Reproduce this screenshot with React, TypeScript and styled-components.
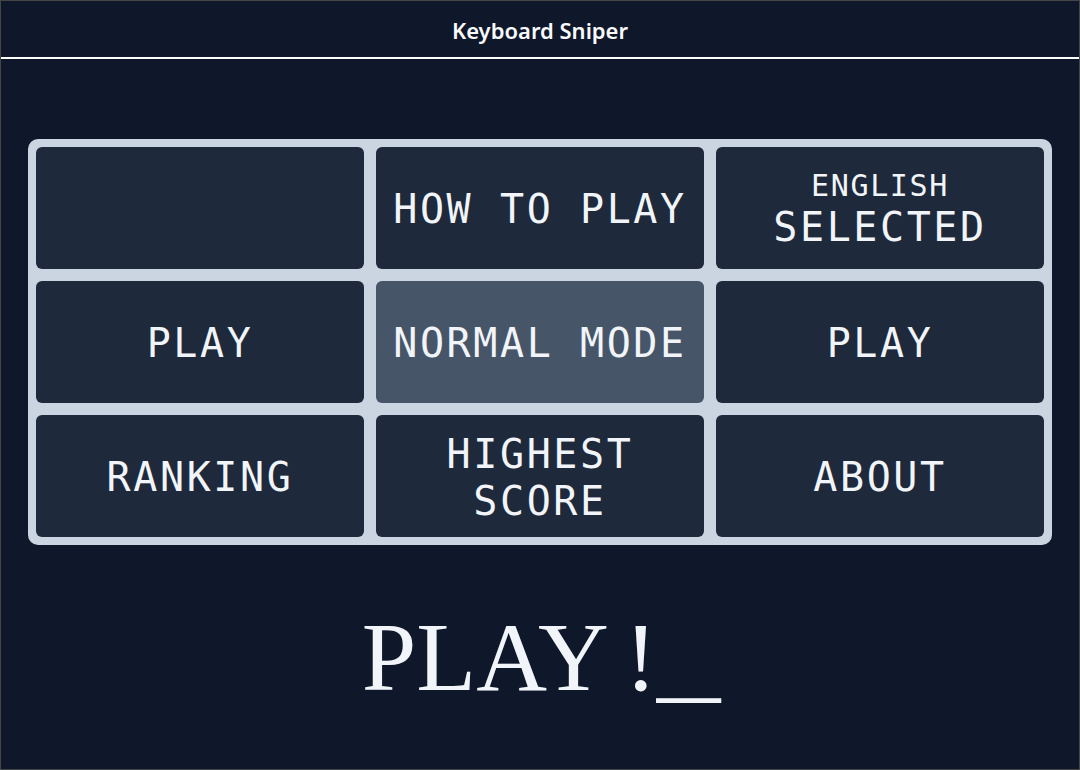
import React from "react";
import styled, { createGlobalStyle } from "styled-components";

const Global = createGlobalStyle`
  html, body { margin: 0; padding: 0; background: #0f172a; }
  * { box-sizing: border-box; }
`;

const Frame = styled.div`
  width: 1080px;
  height: 770px;
  border: 1px solid #454545;
  background: #0f172a;
  display: flex;
  flex-direction: column;
  align-items: center;
`;

const Header = styled.header`
  align-self: stretch;
  height: 58px;
  border-bottom: 2px solid #ffffff;
  display: flex;
  align-items: center;
  justify-content: center;
  color: #f8fafc;
  font-family: "Noto Sans", "Open Sans", sans-serif;
  font-weight: 600;
  font-size: 22px;
  padding-top: 2px;
`;

const Board = styled.div`
  margin-top: 80px;
  width: 1024px;
  padding: 8px;
  background: #cbd5e1;
  border-radius: 10px;
  display: grid;
  grid-template-columns: repeat(3, 328px);
  grid-auto-rows: 122px;
  gap: 12px;
`;

const Cell = styled.div<{ $active?: boolean }>`
  background: ${(p) => (p.$active ? "#475569" : "#1e293b")};
  border-radius: 6px;
  display: flex;
  flex-direction: column;
  align-items: center;
  justify-content: center;
  color: #f1f5f9;
  font-family: "DejaVu Sans Mono", monospace;
  font-size: 40px;
  letter-spacing: 0.065em;
  text-align: center;
  line-height: 1.16;
  padding-top: 3px;
`;

const Small = styled.span`
  font-size: 30px;
  letter-spacing: 0.055em;
  line-height: 1.16;
`;

const Big = styled.span`
  font-size: 40px;
  line-height: 1.16;
`;

const Prompt = styled.div`
  margin-top: 63px;
  font-family: "Liberation Serif", "Times New Roman", serif;
  font-size: 98px;
  line-height: 98px;
  word-spacing: -5px;
  color: #f1f5f9;
  white-space: pre;
`;

const Cursor = styled.span`
  display: inline-block;
  transform: scaleX(1.29);
  transform-origin: left center;
  margin-right: 12px;
`;

export default function App() {
  return (
    <>
      <Global />
      <Frame>
        <Header>Keyboard Sniper</Header>
        <Board>
          <Cell />
          <Cell>HOW TO PLAY</Cell>
          <Cell>
            <Small>ENGLISH</Small>
            <Big>SELECTED</Big>
          </Cell>
          <Cell>PLAY</Cell>
          <Cell $active>NORMAL MODE</Cell>
          <Cell>PLAY</Cell>
          <Cell>RANKING</Cell>
          <Cell>
            HIGHEST
            <br />
            SCORE
          </Cell>
          <Cell>ABOUT</Cell>
        </Board>
        <Prompt>
          PLAY !<Cursor>_</Cursor>
        </Prompt>
      </Frame>
    </>
  );
}
